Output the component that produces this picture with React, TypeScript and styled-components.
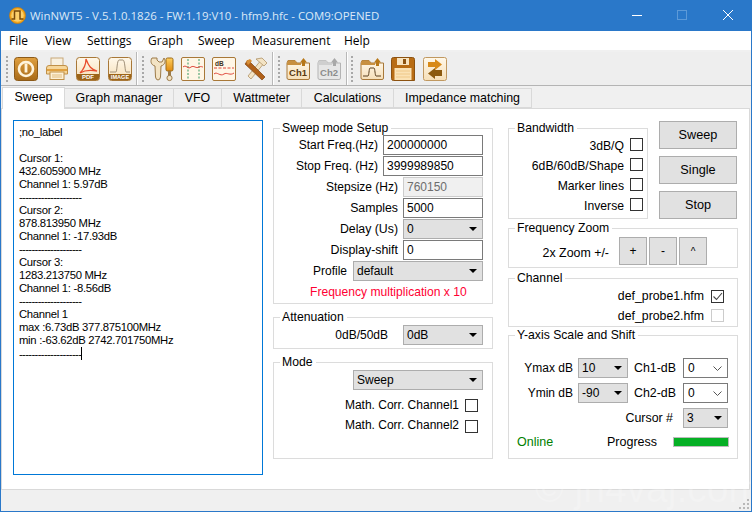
import React from 'react';
import styled, { createGlobalStyle } from 'styled-components';

const Global = createGlobalStyle`
  html, body { margin: 0; padding: 0; background: #f0f0f0; }
  #root { width: 752px; height: 512px; overflow: hidden; }
  * { box-sizing: border-box; }
`;

const Win = styled.div`
  position: relative; width: 752px; height: 512px; overflow: hidden;
  background: #f0f0f0; font-family: "Liberation Sans", Arial, sans-serif; font-size: 12px; color: #000;
  border: 1px solid #2a78c9; border-top: 0;
`;
const TitleBar = styled.div`
  position: absolute; left: 0; top: 0; width: 752px; height: 31px; background: #2a78c9;
`;
const TitleText = styled.div`
  position: absolute; left: 30px; top: 7px; font: 11.45px/17px "Open Sans", sans-serif; color: #dce9f7; white-space: nowrap;
`;
const WinIcon = styled.svg` position: absolute; left: 9px; top: 7px; `;
const WinCtl = styled.svg<{ $x: number }>` position: absolute; left: ${p => p.$x}px; top: 10px; `;

const MenuBar = styled.div`
  position: absolute; left: 0; top: 31px; width: 752px; height: 20px; background: #fff; border-bottom: 1px solid #f0f0f0;
`;
const MenuItem = styled.span<{ $x: number }>`
  position: absolute; left: ${p => p.$x}px; top: 1px; font: 12px/18px "Open Sans", sans-serif; color: #000;
`;

const ToolBar = styled.div`
  position: absolute; left: 0; top: 52px; width: 752px; height: 34px; background: #eeeeee; border-bottom: 1px solid #b4b4b4;
`;
const Sep = styled.div<{ $x: number }>`
  position: absolute; left: ${p => p.$x}px; top: 0; width: 2px; height: 33px; border-left: 1px solid #b8b8b8; border-right: 1px solid #fff;
`;
const Grip = styled.div<{ $x: number }>`
  position: absolute; left: ${p => p.$x}px; top: 4px; width: 2px; height: 26px;
  background: repeating-linear-gradient(to bottom, #a8a8a8 0 2px, transparent 2px 4px);
`;
const Tool = styled.svg<{ $x: number }>` position: absolute; left: ${p => p.$x}px; top: 5px; `;

const TabStrip = styled.div` position: absolute; left: 1px; top: 87px; height: 22px; width: 749px; `;
const Tab = styled.div<{ $x: number; $w: number; $active?: boolean }>`
  position: absolute; left: ${p => p.$x}px; width: ${p => p.$w}px;
  top: ${p => (p.$active ? 0 : 1)}px; height: ${p => (p.$active ? 22 : 20)}px;
  background: ${p => (p.$active ? '#fff' : '#f0f0f0')};
  border: 1px solid #d9d9d9; border-bottom: ${p => (p.$active ? 0 : '1px solid #d9d9d9')};
  z-index: ${p => (p.$active ? 2 : 1)};
  text-align: center; line-height: 19px; font-size: 12.4px; white-space: nowrap;
`;
const Pane = styled.div`
  position: absolute; left: 1px; top: 108px; width: 749px; height: 382px; background: #fff; border: 1px solid #d9d9d9;
`;
const Layer = styled.div` position: absolute; left: -1px; top: 0; width: 752px; height: 512px; `;

const Console = styled.div`
  position: absolute; left: 13px; top: 120px; width: 250px; height: 355px; background: #fff; border: 1px solid #0078d7;
  padding: 5px 5px; font-size: 11.3px; line-height: 13px; white-space: pre; letter-spacing: -0.3px;
`;
const ConsoleLine = styled.div` height: 13px; `;
const Dashes = styled.span` letter-spacing: -0.65px; `;
const Caret = styled.span` display: inline-block; width: 1px; height: 13px; background: #000; vertical-align: -2px; `;

const Group = styled.div<{ $x: number; $y: number; $w: number; $h: number }>`
  position: absolute; left: ${p => p.$x}px; top: ${p => p.$y}px; width: ${p => p.$w}px; height: ${p => p.$h}px;
  border: 1px solid #dcdcdc;
`;
const Legend = styled.div`
  position: absolute; left: 6px; top: -8px; padding: 0 3px 0 2px; background: #fff; font-size: 12.2px; line-height: 15px; white-space: nowrap;
`;
const Label = styled.div<{ $r: number; $y: number; $s?: number }>`
  position: absolute; right: ${p => 752 - p.$r}px; top: ${p => p.$y}px; line-height: 16px; font-size: ${p => p.$s ?? 12}px; white-space: nowrap;
`;
const LeftLabel = styled.div<{ $x: number; $y: number; $color?: string; $s?: number }>`
  position: absolute; left: ${p => p.$x}px; top: ${p => p.$y}px; line-height: 16px; font-size: ${p => p.$s ?? 12.5}px; white-space: nowrap;
  color: ${p => p.$color ?? '#000'};
`;
const Input = styled.div<{ $x: number; $y: number; $w: number; $disabled?: boolean }>`
  position: absolute; left: ${p => p.$x}px; top: ${p => p.$y}px; width: ${p => p.$w}px; height: 20px;
  border: 1px solid ${p => (p.$disabled ? '#cccccc' : '#7a7a7a')}; background: ${p => (p.$disabled ? '#f0f0f0' : '#fff')};
  color: ${p => (p.$disabled ? '#6d6d6d' : '#000')};
  padding-left: 3px; line-height: 19px; font-size: 12px;
`;
const Select = styled.div<{ $x: number; $y: number; $w: number }>`
  position: absolute; left: ${p => p.$x}px; top: ${p => p.$y}px; width: ${p => p.$w}px; height: 20px;
  border: 1px solid #adadad; background: #e1e1e1; padding-left: 3px; line-height: 19px; font-size: 12px;
  &::after {
    content: ''; position: absolute; right: 5px; top: 7px;
    border-left: 4px solid transparent; border-right: 4px solid transparent; border-top: 4px solid #000;
  }
`;
const Combo = styled.div<{ $x: number; $y: number; $w: number }>`
  position: absolute; left: ${p => p.$x}px; top: ${p => p.$y}px; width: ${p => p.$w}px; height: 20px;
  border: 1px solid #7a7a7a; background: #fff; padding-left: 4px; line-height: 19px; font-size: 12px;
`;
const Chevron = styled.svg` position: absolute; right: 5px; top: 7px; `;
const Check = styled.div<{ $x: number; $y: number; $off?: boolean }>`
  position: absolute; left: ${p => p.$x}px; top: ${p => p.$y}px; width: 13px; height: 13px;
  border: 1px solid ${p => (p.$off ? '#cccccc' : '#333333')}; background: #fff;
`;
const CheckMark = styled.svg` display: block; `;
const Btn = styled.div<{ $x: number; $y: number; $w: number; $h: number; $s?: number }>`
  position: absolute; left: ${p => p.$x}px; top: ${p => p.$y}px; width: ${p => p.$w}px; height: ${p => p.$h}px;
  border: 1px solid #adadad; background: #e1e1e1; display: flex; align-items: center; justify-content: center;
  font-size: ${p => p.$s ?? 12.7}px;
`;
const Bar = styled.div`
  position: absolute; left: 673px; top: 437px; width: 56px; height: 10px; background: #06b025; border: 1px solid #bcbcbc;
`;
const Status = styled.div`
  position: absolute; left: 1px; top: 490px; width: 749px; height: 21px; background: #f0f0f0;
`;
const Watermark = styled.div`
  position: absolute; left: 535px; top: 467px; font-size: 39px; line-height: 44px; color: rgba(255,255,255,0.22); white-space: nowrap; z-index: 5;
`;
const SizeGrip = styled.svg` position: absolute; left: 738px; top: 498px; `;
const HiddenDefs = styled.svg` position: absolute; `;

const T = styled.text` font-family: "Liberation Sans", Arial, sans-serif; font-weight: 700; `;

const consoleLines = [
  ';no_label', '', 'Cursor 1:', '432.605900 MHz', 'Channel 1: 5.97dB', '-',
  'Cursor 2:', '878.813950 MHz', 'Channel 1: -17.93dB', '-',
  'Cursor 3:', '1283.213750 MHz', 'Channel 1: -8.56dB', '-',
  'Channel 1', 'max :6.73dB 377.875100MHz', 'min :-63.62dB 2742.701750MHz',
];
const dashes = '--------------------';

const Defs = () => (
  <HiddenDefs width="0" height="0">
    <defs>
      <linearGradient id="cream" x1="0" y1="0" x2="0" y2="1"><stop offset="0" stopColor="#fff8ea" /><stop offset="1" stopColor="#f6dfb8" /></linearGradient>
      <linearGradient id="brown" x1="0" y1="0" x2="0" y2="1"><stop offset="0" stopColor="#e0a040" /><stop offset="1" stopColor="#a86a18" /></linearGradient>
      <linearGradient id="gold" x1="0" y1="0" x2="0" y2="1"><stop offset="0" stopColor="#ffd060" /><stop offset="1" stopColor="#e08a10" /></linearGradient>
    </defs>
  </HiddenDefs>
);

const FolderIcon = ({ x, dim, children }: { x: number; dim?: boolean; children: React.ReactNode }) => {
  const stroke = dim ? '#b4b4b4' : '#a87838';
  const fill = dim ? '#e6e6e6' : 'url(#cream)';
  const arrow = dim ? '#a8a8a8' : '#b87818';
  return (
    <Tool $x={x} width="25" height="24" viewBox="0 0 25 24">
      <path d="M1 6 L2 3.5 H9 L11 6 H23.5 V21 Q23.5 22.5 22 22.5 H3 Q1 22.5 1 21 Z" fill={fill} stroke={stroke} strokeWidth="1" />
      <path d="M1 6 L2 3.5 H9 L11 6 H15 V8 H1 Z" fill={dim ? '#cfcfcf' : '#c89040'} />
      <path d="M17.5 1 L21 5.5 H19 V9 H16 V5.5 H14 Z" fill={arrow} />
      {children}
    </Tool>
  );
};

const Toolbar = () => (
  <ToolBar>
    <Grip $x={6} /><Sep $x={136} /><Grip $x={142} /><Sep $x={272} /><Grip $x={278} /><Sep $x={346} /><Grip $x={351} />
    <Tool $x={14} width="24" height="24" viewBox="0 0 24 24">
      <rect x="0.5" y="0.5" width="23" height="23" rx="3" fill="url(#brown)" stroke="#8c5a18" />
      <circle cx="12" cy="12" r="7" fill="none" stroke="#fff4dc" strokeWidth="2.6" />
      <rect x="10.6" y="6.5" width="2.8" height="9" fill="#fff4dc" />
    </Tool>
    <Tool $x={45} width="24" height="24" viewBox="0 0 24 24">
      <rect x="6" y="1" width="12" height="8" fill="#f8f0e0" stroke="#c8a878" />
      <path d="M1.5 11 Q1.5 8.5 4 8.5 H20 Q22.5 8.5 22.5 11 V17 H1.5 Z" fill="#f6d69a" stroke="#c09048" />
      <rect x="2" y="12" width="20" height="2" fill="#e0a040" />
      <rect x="5" y="15" width="14" height="7.5" fill="#fdf0d6" stroke="#c09048" />
      <path d="M7 18 H17 M7 20 H17" stroke="#e0bc80" />
    </Tool>
    <Tool $x={76} width="24" height="24" viewBox="0 0 24 24">
      <rect x="0.5" y="0.5" width="23" height="23" rx="3" fill="url(#cream)" stroke="#a87838" />
      <path d="M1 17 H23 V21 Q23 23 21 23 H3 Q1 23 1 21 Z" fill="#9c6418" />
      <path d="M10 2 C13 10 15 12 21 14 C15 13 9 13 4 16 C8 12 10 8 10 2 Z" fill="none" stroke="#e84c2c" strokeWidth="1.3" />
      <T x="12" y="22" fontSize="6" textAnchor="middle" fill="#fff">PDF</T>
    </Tool>
    <Tool $x={108} width="24" height="24" viewBox="0 0 24 24">
      <rect x="0.5" y="0.5" width="23" height="23" rx="3" fill="url(#cream)" stroke="#a87838" />
      <path d="M1 17 H23 V21 Q23 23 21 23 H3 Q1 23 1 21 Z" fill="#9c6418" />
      <path d="M2 15 H8 C9 15 9 3 11 3 H15 C17 3 17 15 18 15 H22" fill="none" stroke="#a09078" strokeWidth="1" />
      <T x="12" y="22" fontSize="5.6" textAnchor="middle" fill="#fff">IMAGE</T>
    </Tool>
    <Tool $x={150} width="24" height="25" viewBox="0 0 24 25">
      <path d="M2 1 C0 4 1 8 5 9 L5.5 20 Q6 23 8 23 Q10 23 10.5 20 L11 9 C15 8 16 4 14 1 L12 5 H9 L7 3 V1 Z" fill="#f3e3c4" stroke="#9c7a48" />
      <rect x="16" y="1" width="7" height="13" rx="1.5" fill="url(#gold)" stroke="#9c6a18" />
      <path d="M19.5 14 V20" stroke="#9c7a48" strokeWidth="3" />
      <circle cx="19.5" cy="21" r="2.6" fill="#f3e3c4" stroke="#9c7a48" />
    </Tool>
    <Tool $x={181} width="24" height="24" viewBox="0 0 24 24">
      <rect x="0.5" y="0.5" width="23" height="23" rx="1.5" fill="#fff6e6" stroke="#a87838" />
      <path d="M7 2 V22 M18 2 V22" stroke="#58a878" strokeWidth="1.2" strokeDasharray="2 1.5" />
      <path d="M2 10 C5 7 7 13 10 10 C13 8 15 12 18 10 C20 9 21 10 22 10" fill="none" stroke="#e0483c" strokeWidth="1" />
    </Tool>
    <Tool $x={212} width="24" height="24" viewBox="0 0 24 24">
      <rect x="0.5" y="0.5" width="23" height="23" rx="1.5" fill="#fff6e6" stroke="#a87838" />
      <T x="3" y="9" fontSize="6.5" fill="#403020">dB</T>
      <path d="M2 11 H22" stroke="#e0483c" strokeDasharray="3 1.5" />
      <path d="M2 17 C5 14 8 20 12 17 C15 15 18 19 22 16" fill="none" stroke="#e0483c" />
    </Tool>
    <Tool $x={242} width="26" height="24" viewBox="0 0 26 24">
      <path d="M20 2 L6 19 L9 22 L23 5 Z" fill="#f3e3c4" stroke="#a88858" strokeWidth="0.7" />
      <path d="M14 2 L20 1 L25 6 L22 9 Z" fill="#f3e3c4" stroke="#a88858" strokeWidth="0.7" />
      <path d="M6 3 L23 20 L20 23 L3 7 Z" fill="#b06018" stroke="#7c4210" strokeWidth="0.7" />
      <path d="M4 4 L8 2 L10 4 L6 8 Z" fill="#d89038" />
    </Tool>
    <FolderIcon x={286}><T x="12" y="19" fontSize="9.5" textAnchor="middle" fill="#5a3a10">Ch1</T></FolderIcon>
    <FolderIcon x={317} dim><T x="12" y="19" fontSize="9.5" textAnchor="middle" fill="#8c8c8c">Ch2</T></FolderIcon>
    <FolderIcon x={360}><path d="M3 19 H8 C9 19 9 11 10 11 H14 C15 11 15 19 16 19 H21" fill="none" stroke="#5a4020" strokeWidth="1" /></FolderIcon>
    <Tool $x={391} width="24" height="24" viewBox="0 0 24 24">
      <path d="M0.5 2.5 Q0.5 0.5 2.5 0.5 H21.5 Q23.5 0.5 23.5 2.5 V23.5 H2.5 Q0.5 23.5 0.5 21.5 Z" fill="#b86c14" stroke="#8c5210" />
      <rect x="6" y="1" width="12" height="7" fill="#f8e4c0" />
      <rect x="12" y="2" width="3" height="5" fill="#8c5210" />
      <rect x="3.5" y="11" width="17" height="12" fill="#fbe2b4" />
      <path d="M5 14 H19 M5 17 H19 M5 20 H19" stroke="#efc888" />
    </Tool>
    <Tool $x={423} width="24" height="24" viewBox="0 0 24 24">
      <rect x="0.5" y="0.5" width="23" height="23" rx="2" fill="url(#cream)" stroke="#c09860" />
      <path d="M5 5 H12 V2 L19 7.5 L12 13 V10 H5 Z" fill="#d88a18" />
      <path d="M19 13 H12 V11 L5 16.5 L12 22 V19 H19 Z" fill="#8c5a10" />
    </Tool>
  </ToolBar>
);

const tabs: [string, number, number, boolean?][] = [
  ['Sweep', 1, 63, true], ['Graph manager', 63, 110], ['VFO', 172, 49], ['Wattmeter', 220, 81],
  ['Calculations', 300, 93], ['Impedance matching', 392, 139],
];

const ChevronIcon = () => (
  <Chevron width="9" height="6" viewBox="0 0 9 6"><path d="M0.5 0.5 L4.5 4.5 L8.5 0.5" fill="none" stroke="#555" /></Chevron>
);

export default function App() {
  return (
    <>
      <Global />
      <Defs />
      <Win>
        <Layer>
          <TitleBar>
            <WinIcon width="17" height="17" viewBox="0 0 17 17">
              <circle cx="8.5" cy="8.5" r="8" fill="#f2a81e" stroke="#c87c10" strokeWidth="0.8" />
              <circle cx="8.5" cy="8.5" r="6.2" fill="#fbcf6a" />
              <path d="M2.5 12 H5.5 V4 H11 V12 H14.5" fill="none" stroke="#7a4a08" strokeWidth="1.5" />
            </WinIcon>
            <TitleText>WinNWT5 - V.5.1.0.1826 - FW:1.19:V10 - hfm9.hfc - COM9:OPENED</TitleText>
            <WinCtl $x={632} width="10" height="10" viewBox="0 0 10 10"><path d="M0 5.5 H10" stroke="#fff" /></WinCtl>
            <WinCtl $x={677} width="10" height="10" viewBox="0 0 10 10"><rect x="0.5" y="0.5" width="9" height="9" fill="none" stroke="#5d9ad8" /></WinCtl>
            <WinCtl $x={723} width="10" height="10" viewBox="0 0 10 10"><path d="M0 0 L10 10 M10 0 L0 10" stroke="#fff" /></WinCtl>
          </TitleBar>
          <MenuBar>
            <MenuItem $x={9}>File</MenuItem>
            <MenuItem $x={45}>View</MenuItem>
            <MenuItem $x={87}>Settings</MenuItem>
            <MenuItem $x={148}>Graph</MenuItem>
            <MenuItem $x={198}>Sweep</MenuItem>
            <MenuItem $x={252}>Measurement</MenuItem>
            <MenuItem $x={344}>Help</MenuItem>
          </MenuBar>
          <Toolbar />
          <TabStrip>
            {tabs.map(([t, x, w, a]) => <Tab key={t} $x={x} $w={w} $active={a}>{t}</Tab>)}
          </TabStrip>
          <Pane />
          <Console>
            {consoleLines.map((l, i) => (
              <ConsoleLine key={i}>{l === '-' ? <Dashes>{dashes}</Dashes> : l}</ConsoleLine>
            ))}
            <ConsoleLine><Dashes>{dashes}</Dashes><Caret /></ConsoleLine>
          </Console>

          <Group $x={273} $y={128} $w={220} $h={176}><Legend>Sweep mode Setup</Legend></Group>
          <Label $r={378} $y={137}>Start Freq.(Hz)</Label>
          <Input $x={383} $y={135} $w={100}>200000000</Input>
          <Label $r={378} $y={158}>Stop Freq. (Hz)</Label>
          <Input $x={383} $y={156} $w={100}>3999989850</Input>
          <Label $r={398} $y={179}>Stepsize (Hz)</Label>
          <Input $x={403} $y={177} $w={80} $disabled>760150</Input>
          <Label $r={398} $y={200} $s={12.3}>Samples</Label>
          <Input $x={403} $y={198} $w={80}>5000</Input>
          <Label $r={398} $y={221} $s={12.3}>Delay (Us)</Label>
          <Select $x={403} $y={219} $w={80}>0</Select>
          <Label $r={398} $y={242} $s={12.4}>Display-shift</Label>
          <Input $x={403} $y={240} $w={80}>0</Input>
          <Label $r={347} $y={263}>Profile</Label>
          <Select $x={353} $y={261} $w={130}>default</Select>
          <LeftLabel $x={310} $y={284} $color="#ff0033" $s={12.1}>Frequency multiplication x 10</LeftLabel>

          <Group $x={273} $y={317} $w={220} $h={32}><Legend>Attenuation</Legend></Group>
          <Label $r={388} $y={327}>0dB/50dB</Label>
          <Select $x={403} $y={325} $w={80}>0dB</Select>

          <Group $x={273} $y={362} $w={220} $h={97}><Legend>Mode</Legend></Group>
          <Select $x={353} $y={370} $w={130}>Sweep</Select>
          <Label $r={459} $y={397}>Math. Corr. Channel1</Label>
          <Check $x={465} $y={399} />
          <Label $r={459} $y={417}>Math. Corr. Channel2</Label>
          <Check $x={465} $y={420} />

          <Group $x={508} $y={128} $w={140} $h={91}><Legend>Bandwidth</Legend></Group>
          <Label $r={624} $y={138} $s={12.2}>3dB/Q</Label><Check $x={630} $y={138} />
          <Label $r={624} $y={158} $s={12.2}>6dB/60dB/Shape</Label><Check $x={630} $y={158} />
          <Label $r={624} $y={178} $s={12.2}>Marker lines</Label><Check $x={630} $y={178} />
          <Label $r={624} $y={198} $s={12.2}>Inverse</Label><Check $x={630} $y={198} />

          <Btn $x={659} $y={121} $w={78} $h={28}>Sweep</Btn>
          <Btn $x={659} $y={156} $w={78} $h={28}>Single</Btn>
          <Btn $x={659} $y={191} $w={78} $h={28}>Stop</Btn>

          <Group $x={508} $y={228} $w={230} $h={40}><Legend>Frequency Zoom</Legend></Group>
          <Label $r={609} $y={245} $s={12.4}>2x Zoom +/-</Label>
          <Btn $x={619} $y={237} $w={28} $h={28} $s={12}>+</Btn>
          <Btn $x={649} $y={237} $w={28} $h={28} $s={12}>-</Btn>
          <Btn $x={679} $y={237} $w={28} $h={28} $s={10}>^</Btn>

          <Group $x={508} $y={278} $w={230} $h={49}><Legend>Channel</Legend></Group>
          <Label $r={704} $y={288} $s={12.3}>def_probe1.hfm</Label>
          <Check $x={711} $y={290}>
            <CheckMark width="11" height="11" viewBox="0 0 11 11"><path d="M1.5 5.5 L4.5 8.5 L10 2" fill="none" stroke="#444" strokeWidth="1.1" /></CheckMark>
          </Check>
          <Label $r={704} $y={308} $s={12.3}>def_probe2.hfm</Label>
          <Check $x={711} $y={309} $off />

          <Group $x={508} $y={335} $w={230} $h={124}><Legend>Y-axis Scale and Shift</Legend></Group>
          <Label $r={573} $y={360}>Ymax dB</Label>
          <Select $x={578} $y={358} $w={50}>10</Select>
          <Label $r={676} $y={360} $s={12.4}>Ch1-dB</Label>
          <Combo $x={683} $y={358} $w={45}>0<ChevronIcon /></Combo>
          <Label $r={573} $y={385}>Ymin dB</Label>
          <Select $x={578} $y={383} $w={50}>-90</Select>
          <Label $r={676} $y={385} $s={12.4}>Ch2-dB</Label>
          <Combo $x={683} $y={383} $w={45}>0<ChevronIcon /></Combo>
          <Label $r={673} $y={410} $s={12.4}>Cursor #</Label>
          <Select $x={683} $y={408} $w={45}>3</Select>
          <LeftLabel $x={517} $y={434} $color="#008000">Online</LeftLabel>
          <LeftLabel $x={607} $y={434}>Progress</LeftLabel>
          <Bar />

          <Status />
          <Watermark>© jh4vaj.com</Watermark>
          <SizeGrip width="12" height="12" viewBox="0 0 12 12">
            <path d="M9 1h2v2H9z M5 5h2v2H5z M9 5h2v2H9z M1 9h2v2H1z M5 9h2v2H5z M9 9h2v2H9z" fill="#b8b8b8" />
          </SizeGrip>
        </Layer>
      </Win>
    </>
  );
}
